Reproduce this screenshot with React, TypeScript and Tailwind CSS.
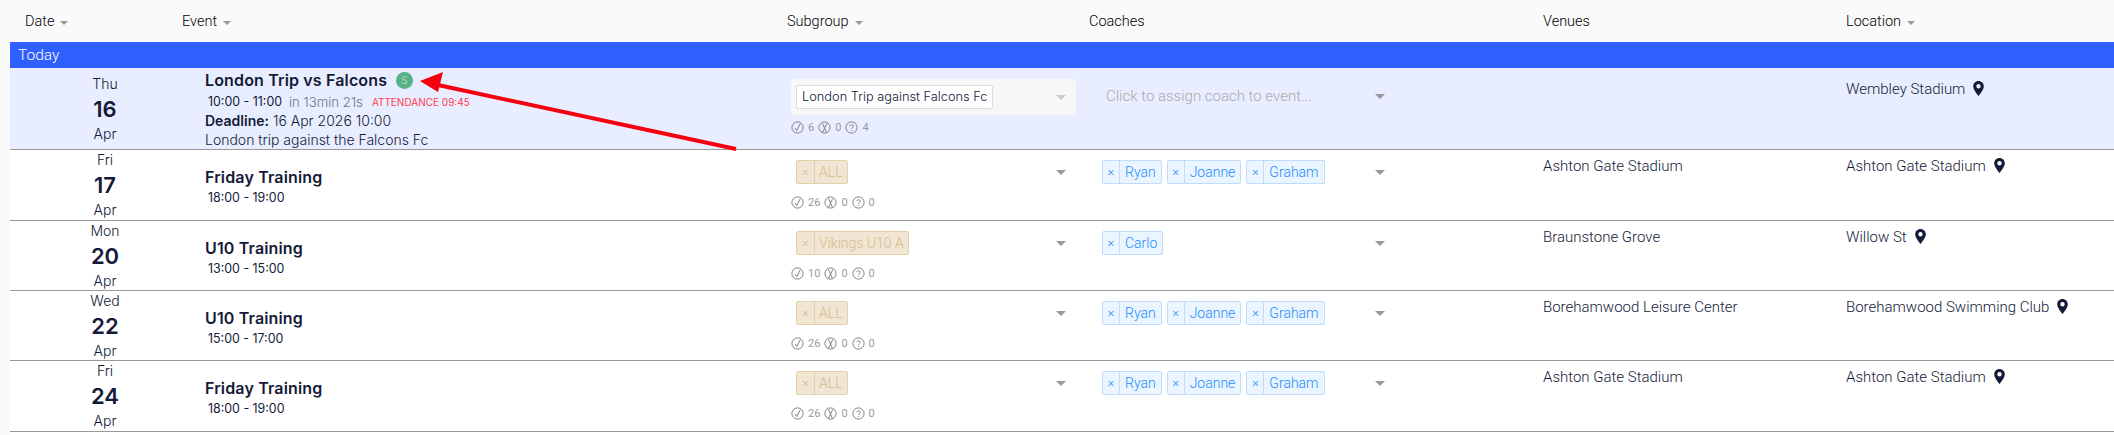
const columns = "grid grid-cols-[157px_605px_302px_454px_303px_283px]";

function Caret({ light = false }: { light?: boolean }) {
    return <span className={`block w-0 h-0 border-x-[5px] border-x-transparent border-t-[5px] ${light ? "border-t-[#cccccc]" : "border-t-[#999999]"}`} />;
}

function HeaderCell({ label, sort = false }: { label: string; sort?: boolean }) {
    return (
        <div className="pl-[15px] pt-[2px] flex items-center gap-[6px] text-[14.5px] font-light text-[#000000]">
            {label}
            {sort && <span className="block w-0 h-0 border-x-[4px] border-x-transparent border-t-[4px] border-t-[#999999] mt-[2px]" />}
        </div>
    );
}

function StatIcon({ kind }: { kind: "yes" | "no" | "maybe" }) {
    return (
        <svg width="13" height="13" viewBox="0 0 13 13" fill="none" stroke="#808080" strokeWidth="1" className="shrink-0">
            <circle cx="6.5" cy="6.5" r="5.6" />
            {kind === "yes" && <path d="M4 7l1.8 2.6L9.2 2.8" />}
            {kind === "no" && <path d="M4.500 2.500l4 9M8.800 2.500l-4.400 9" />}
            {kind === "maybe" && <path d="M5 5.200c0-2 3.200-2 3.200 0 0 1.300-1.600 1.300-1.600 2.600M6.600 9.200v.8" />}
        </svg>
    );
}

function Stats({ yes, no, maybe }: { yes: number; no: number; maybe: number }) {
    return (
        <div className="flex items-center text-[11px] leading-[13px] text-[#9a9a9a]">
            <StatIcon kind="yes" />
            <span className="mx-[4px]">{yes}</span>
            <StatIcon kind="no" />
            <span className="mx-[4px]">{no}</span>
            <StatIcon kind="maybe" />
            <span className="ml-[4px]">{maybe}</span>
        </div>
    );
}

function SubgroupTag({ label }: { label: string }) {
    return (
        <span className="flex h-[24px] items-stretch rounded-[2px] border border-[#e3d0a8] bg-[#f0e6d3] text-[#d6bb8c] text-[14px] leading-[22px] font-light">
            <span className="w-[18px] text-center border-r border-[#e3d0a8] text-[13px]">×</span>
            <span className="px-[4px]">{label}</span>
        </span>
    );
}

function CoachTag({ label }: { label: string }) {
    return (
        <span className="flex h-[24px] items-stretch rounded-[2px] border border-[#bfdcff] bg-[#ebf5ff] text-[#1c8cff] text-[14px] leading-[22px] font-light">
            <span className="w-[17px] text-center border-r border-[#bfdcff] text-[13px]">×</span>
            <span className="px-[5px]">{label}</span>
        </span>
    );
}

function Pin() {
    return (
        <svg width="11" height="15" viewBox="0 0 11 15" className="shrink-0 mb-[2px]">
            <path
                fillRule="evenodd"
                fill="#141a38"
                d="M5.500 0C2.500 0 .2 2.300.2 5.200c0 3.400 3.700 7.600 5.300 9.800 1.600-2.200 5.300-6.400 5.300-9.800C10.800 2.300 8.500 0 5.500 0zm0 3a2.200 2.200 0 1 1 0 4.400 2.200 2.200 0 0 1 0-4.400z"
            />
        </svg>
    );
}

interface EventRow {
    day: string;
    date: number;
    title: string;
    time: string;
    height: string;
    subgroup: string;
    stats: [number, number, number];
    coaches: string[];
    venue: string;
    location: string;
}

const rows: EventRow[] = [
    { day: "Fri", date: 17, title: "Friday Training", time: "18:00 - 19:00", height: "h-[71px]", subgroup: "ALL", stats: [26, 0, 0], coaches: ["Ryan", "Joanne", "Graham"], venue: "Ashton Gate Stadium", location: "Ashton Gate Stadium" },
    { day: "Mon", date: 20, title: "U10 Training", time: "13:00 - 15:00", height: "h-[70px]", subgroup: "Vikings U10 A", stats: [10, 0, 0], coaches: ["Carlo"], venue: "Braunstone Grove", location: "Willow St" },
    { day: "Wed", date: 22, title: "U10 Training", time: "15:00 - 17:00", height: "h-[70px]", subgroup: "ALL", stats: [26, 0, 0], coaches: ["Ryan", "Joanne", "Graham"], venue: "Borehamwood Leisure Center", location: "Borehamwood Swimming Club" },
    { day: "Fri", date: 24, title: "Friday Training", time: "18:00 - 19:00", height: "h-[71px]", subgroup: "ALL", stats: [26, 0, 0], coaches: ["Ryan", "Joanne", "Graham"], venue: "Ashton Gate Stadium", location: "Ashton Gate Stadium" },
];

function DateCell({ day, date, top }: { day: string; date: number; top: string }) {
    return (
        <div className={`pl-[33px] text-center font-['Inter',sans-serif] text-[#141a38] ${top}`}>
            <div className="text-[14px] leading-[20px] font-light">{day}</div>
            <div className="text-[22px] leading-[30px] font-semibold">{date}</div>
            <div className="text-[14px] leading-[20px] font-light">Apr</div>
        </div>
    );
}

export default function App() {
    return (
        <div className="relative min-h-[435px] w-[2114px] overflow-hidden bg-white font-['Roboto',sans-serif] text-[#141a38]">
            <div className="absolute inset-y-0 left-0 w-[10px] bg-[#fafafa]" />
            <div className="ml-[10px]">
                {/* Table head */}
                <div className={`${columns} h-[42px] bg-[#fafafa]`}>
                    <HeaderCell label="Date" sort />
                    <HeaderCell label="Event" sort />
                    <HeaderCell label="Subgroup" sort />
                    <HeaderCell label="Coaches" />
                    <HeaderCell label="Venues" />
                    <HeaderCell label="Location" sort />
                </div>
                <div className="h-[26px] bg-[#2f5fff] pl-[8px] text-[15.5px] leading-[27px] font-light text-white">Today</div>

                {/* Today's event */}
                <div className={`${columns} h-[82px] bg-[#e8eeff] border-b border-[#999999]`}>
                    <DateCell day="Thu" date={16} top="pt-[6px]" />
                    <div className="pl-[38px] font-['Inter',sans-serif]">
                        <div className="flex items-center pt-[2px] text-[16px] leading-[20px] font-semibold tracking-[0.15px]">
                            London Trip vs Falcons
                            <span className="ml-[9px] flex h-[17px] w-[17px] items-center justify-center rounded-full bg-[#55b286] text-[10px] font-normal text-[#a8d8c0]">S</span>
                        </div>
                        <div className="mt-[3px] pl-[3px] text-[12.4px] leading-[18px] flex items-center">
                            <span>10:00 - 11:00</span>
                            <span className="ml-[7px] text-[13.2px] font-light text-[#70757f]">in 13min 21s</span>
                            <span className="ml-[9px] text-[10px] text-[#ff3b4e]">ATTENDANCE 09:45</span>
                        </div>
                        <div className="text-[14px] leading-[19px] font-light"><span className="font-semibold">Deadline:</span> 16 Apr 2026 10:00</div>
                        <div className="text-[14px] leading-[19px] font-light">London trip against the Falcons Fc</div>
                    </div>
                    <div className="pl-[19px] pt-[11px]">
                        <div className="flex h-[36px] w-[285px] items-center justify-between rounded-[4px] bg-[#f7f7f7] pl-[5px] pr-[10px]">
                            <span className="flex h-[24px] items-center rounded-[2px] border border-[#dcdcdc] bg-white px-[5px] font-['Inter',sans-serif] text-[12.8px] font-light whitespace-nowrap">London Trip against Falcons Fc</span>
                            <Caret light />
                        </div>
                        <div className="mt-[6px]"><Stats yes={6} no={0} maybe={4} /></div>
                    </div>
                    <div className="pl-[32px] pt-[16px] pr-[143px]">
                        <div className="flex h-[24px] items-center justify-between text-[15px] font-light text-[#aaaaaa]">
                            Click to assign coach to event...
                            <Caret />
                        </div>
                    </div>
                    <div />
                    <div className="pl-[15px] pt-[11px] flex items-center gap-[8px] self-start text-[15px] leading-[20px] font-light">
                        Wembley Stadium
                        <Pin />
                    </div>
                </div>

                {/* Upcoming events */}
                {rows.map((row) => (
                    <div key={row.date} className={`${columns} ${row.height} border-b border-[#999999]`}>
                        <DateCell day={row.day} date={row.date} top="pt-0" />
                        <div className="pl-[38px] pt-[17px] font-['Inter',sans-serif]">
                            <div className="text-[16px] leading-[20px] font-semibold tracking-[0.15px]">{row.title}</div>
                            <div className="mt-[2px] pl-[3px] text-[12.4px] leading-[18px]">{row.time}</div>
                        </div>
                        <div className="pl-[24px] pt-[10px] pr-[8px]">
                            <div className="flex h-[24px] items-center justify-between">
                                <SubgroupTag label={row.subgroup} />
                                <Caret />
                            </div>
                            <div className="ml-[-5px] mt-[12px]">
                                <Stats yes={row.stats[0]} no={row.stats[1]} maybe={row.stats[2]} />
                            </div>
                        </div>
                        <div className="pl-[28px] pt-[10px] pr-[143px]">
                            <div className="flex h-[24px] items-center justify-between">
                                <div className="flex gap-[5px]">
                                    {row.coaches.map((coach) => <CoachTag key={coach} label={coach} />)}
                                </div>
                                <Caret />
                            </div>
                        </div>
                        <div className="pl-[15px] pt-[6px] text-[15px] leading-[20px] font-light">{row.venue}</div>
                        <div className="pl-[15px] pt-[6px] flex items-center gap-[8px] self-start text-[15px] leading-[20px] font-light whitespace-nowrap">
                            {row.location}
                            <Pin />
                        </div>
                    </div>
                ))}
            </div>

            {/* Annotation arrow */}
            <svg className="absolute left-0 top-0 pointer-events-none" width="2114" height="435" viewBox="0 0 2114 435">
                <line x1="736" y1="149" x2="438" y2="85" stroke="#f5000f" strokeWidth="4" />
                <path d="M420 81l23-9-5 20z" fill="#f5000f" />
            </svg>
        </div>
    );
}
